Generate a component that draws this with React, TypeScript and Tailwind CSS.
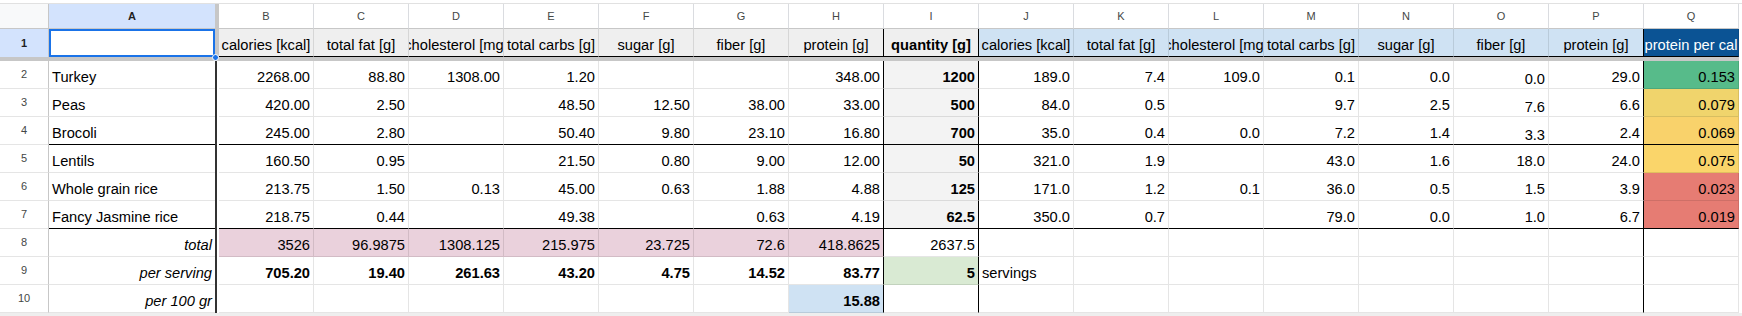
import clsx from "clsx";

const letters = ["A", "B", "C", "D", "E", "F", "G", "H", "I", "J", "K", "L", "M", "N", "O", "P", "Q"];
const labels = [
  "calories [kcal]",
  "total fat [g]",
  "cholesterol [mg]",
  "total carbs [g]",
  "sugar [g]",
  "fiber [g]",
  "protein [g]",
];

// name, raw B-H, quantity I, per 100g J-P, ratio Q
const foods = [
  ["Turkey", "2268.00", "88.80", "1308.00", "1.20", "", "", "348.00", "1200", "189.0", "7.4", "109.0", "0.1", "0.0", "0.0", "29.0", "0.153"],
  ["Peas", "420.00", "2.50", "", "48.50", "12.50", "38.00", "33.00", "500", "84.0", "0.5", "", "9.7", "2.5", "7.6", "6.6", "0.079"],
  ["Brocoli", "245.00", "2.80", "", "50.40", "9.80", "23.10", "16.80", "700", "35.0", "0.4", "0.0", "7.2", "1.4", "3.3", "2.4", "0.069"],
  ["Lentils", "160.50", "0.95", "", "21.50", "0.80", "9.00", "12.00", "50", "321.0", "1.9", "", "43.0", "1.6", "18.0", "24.0", "0.075"],
  ["Whole grain rice", "213.75", "1.50", "0.13", "45.00", "0.63", "1.88", "4.88", "125", "171.0", "1.2", "0.1", "36.0", "0.5", "1.5", "3.9", "0.023"],
  ["Fancy Jasmine rice", "218.75", "0.44", "", "49.38", "", "0.63", "4.19", "62.5", "350.0", "0.7", "", "79.0", "0.0", "1.0", "6.7", "0.019"],
];

const ratioBg = ["bg-[#57bb8a]", "bg-[#f0d46c]", "bg-[#f9d26b]", "bg-[#fad56a]", "bg-[#e67c73]", "bg-[#e67c73]"];

const totals = ["3526", "96.9875", "1308.125", "215.975", "23.725", "72.6", "418.8625"];
const perServing = ["705.20", "19.40", "261.63", "43.20", "4.75", "14.52", "83.77"];

type CellProps = {
  col: number;
  row: number;
  v?: string;
  cls?: string;
  align?: "l" | "r" | "c";
  low?: boolean;
};

function Cell({ col, row, v = "", cls, align = "r", low }: CellProps) {
  const blackR = col === 7 || col === 8 || col === 15;
  const blackB = (row === 1 && col > 0) || row === 4 || row === 7;
  return (
    <div
      className={clsx(
        "flex items-end overflow-hidden whitespace-nowrap px-[3px] text-[14.67px] leading-[17px] text-black border-b",
        col === 0 ? "" : "border-r",
        blackR ? "border-r-black" : "border-r-black/10",
        blackB ? "border-b-black" : "border-b-black/10",
        low ? "pb-0" : "pb-[2px]",
        align === "l" && "justify-start",
        align === "r" && "justify-end",
        align === "c" && "justify-center",
        cls
      )}
    >
      <span className="shrink-0">{v}</span>
    </div>
  );
}

function RowHead({ n }: { n: number }) {
  return (
    <div className="flex items-center justify-center border-r border-b border-r-[#c7c7c7] border-b-black/10 text-[11px] text-[#444746]">
      {n}
    </div>
  );
}

function Spacer() {
  return <div className="border-l-2 border-l-[#333] bg-white" />;
}

export default function App() {
  return (
    <div className="w-[1742px] h-[316px] bg-white font-['Liberation_Sans',Arial,sans-serif] overflow-hidden">
      <div className="h-[4px] border-b border-[#e1e1e1]" />
      <div className="grid grid-cols-[49px_166px_4px_repeat(16,95px)] grid-rows-[25px_28px_4px_repeat(9,28px)]">
        {/* column letters */}
        <div className="bg-[#f8f9fa] border-r border-b border-[#c7c7c7]" />
        <div className="flex items-center justify-center bg-[#d3e3fd] border-b border-[#c7c7c7] text-[11px] font-bold text-[#1f1f1f]">
          A
        </div>
        <div className="bg-[#c7c7c7]" />
        {letters.slice(1).map((l) => (
          <div
            key={l}
            className="flex items-center justify-center border-r border-b border-r-[#dadce0] border-b-[#c7c7c7] text-[11px] text-[#444746]"
          >
            {l}
          </div>
        ))}

        {/* row 1: headings */}
        <div className="flex items-center justify-center bg-[#d3e3fd] border-r border-[#c7c7c7] text-[11px] font-bold text-[#1f1f1f]">
          1
        </div>
        <div className="relative bg-white">
          <div className="absolute inset-0 border-2 border-[#1a73e8]" />
          <div className="absolute -right-[4px] -bottom-[4px] z-10 w-[7px] h-[7px] rounded-full bg-[#1a73e8] border border-white" />
        </div>
        <div className="bg-[#c7c7c7]" />
        {labels.map((t, i) => (
          <Cell key={"b" + i} col={i + 1} row={1} v={t} align="c" cls="bg-[#efefef]" />
        ))}
        <Cell col={8} row={1} v="quantity [g]" align="c" cls="bg-[#efefef] font-bold" />
        {labels.map((t, i) => (
          <Cell key={"j" + i} col={i + 9} row={1} v={t} align="c" cls="bg-[#cfe2f3]" />
        ))}
        <Cell col={16} row={1} v="protein per cal" align="c" cls="bg-[#0b5394] !text-white" />

        {/* frozen divider */}
        <div className="col-span-full bg-[#c7c7c7]" />

        {/* ingredients */}
        {foods.map((f, r) => {
          const row = r + 2;
          return [
            <RowHead key={"h" + row} n={row} />,
            <Cell key={"a" + row} col={0} row={row} v={f[0]} align="l" />,
            <Spacer key={"s" + row} />,
            ...f.slice(1).map((v, i) => {
              const col = i + 1;
              let cls = "";
              if (col === 8) cls = "bg-[#f3f3f3] font-bold";
              if (col === 16) cls = ratioBg[r];
              return (
                <Cell key={row + "-" + col} col={col} row={row} v={v} cls={cls} low={col === 14 && r < 3} />
              );
            }),
          ];
        })}

        {/* row 8: total */}
        <RowHead n={8} />
        <Cell col={0} row={8} v="total" cls="italic" />
        <Spacer />
        {totals.map((v, i) => (
          <Cell key={"t" + i} col={i + 1} row={8} v={v} cls="bg-[#ead1dc]" />
        ))}
        <Cell col={8} row={8} v="2637.5" />
        {letters.slice(9).map((l, i) => (
          <Cell key={"t8" + l} col={i + 9} row={8} />
        ))}

        {/* row 9: per serving */}
        <RowHead n={9} />
        <Cell col={0} row={9} v="per serving" cls="italic" />
        <Spacer />
        {perServing.map((v, i) => (
          <Cell key={"p" + i} col={i + 1} row={9} v={v} cls="font-bold" />
        ))}
        <Cell col={8} row={9} v="5" cls="bg-[#d9ead3] font-bold" />
        <Cell col={9} row={9} v="servings" align="l" />
        {letters.slice(10).map((l, i) => (
          <Cell key={"t9" + l} col={i + 10} row={9} />
        ))}

        {/* row 10: per 100 gr */}
        <RowHead n={10} />
        <Cell col={0} row={10} v="per 100 gr" cls="italic" />
        <Spacer />
        {letters.slice(1, 7).map((l, i) => (
          <Cell key={"t10" + l} col={i + 1} row={10} />
        ))}
        <Cell col={7} row={10} v="15.88" cls="bg-[#cfe2f3] font-bold" />
        {letters.slice(8).map((l, i) => (
          <Cell key={"u10" + l} col={i + 8} row={10} />
        ))}
      </div>
      <div className="h-[3px] bg-[#eeeeee]" />
    </div>
  );
}
